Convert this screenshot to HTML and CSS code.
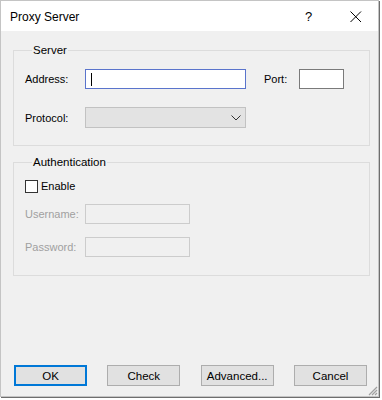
FILE: index.html
```html
<!DOCTYPE html>
<html>
<head>
<meta charset="utf-8">
<link rel="stylesheet" href="styles.css">
</head>
<body>
<div class="window">
  <div class="titlebar">
    <span class="title">Proxy Server</span>
    <span class="help">?</span>
    <span class="close">
      <svg width="12" height="12" viewBox="0 0 12 12"><path d="M0.5 0.5 L11 11 M11 0.5 L0.5 11" stroke="#000" stroke-width="1" fill="none"/></svg>
    </span>
  </div>
  <div class="content">
    <fieldset class="group server">
      <legend>Server</legend>
      <div class="row">
        <span class="label">Address:</span>
        <div class="textbox focused address"><span class="caret"></span></div>
        <span class="label port-label">Port:</span>
        <div class="textbox port"></div>
      </div>
      <div class="row row-protocol">
        <span class="label">Protocol:</span>
        <div class="combo">
          <svg width="10" height="6" viewBox="0 0 10 6"><path d="M0.5 0.5 L5 5 L9.5 0.5" stroke="#333" stroke-width="1" fill="none"/></svg>
        </div>
      </div>
    </fieldset>
    <fieldset class="group auth">
      <legend>Authentication</legend>
      <div class="row row-enable">
        <span class="checkbox"></span>
        <span class="check-label">Enable</span>
      </div>
      <div class="row row-user">
        <span class="label disabled">Username:</span>
        <div class="textbox disabled-box"></div>
      </div>
      <div class="row row-pass">
        <span class="label disabled">Password:</span>
        <div class="textbox disabled-box"></div>
      </div>
    </fieldset>
    <div class="buttons">
      <button class="btn default">OK</button>
      <button class="btn">Check</button>
      <button class="btn">Advanced...</button>
      <button class="btn">Cancel</button>
    </div>
  </div>
  <svg class="grip" width="10" height="10" viewBox="0 0 10 10">
    <path d="M9 1 L1 9 M9 4 L4 9 M9 7 L7 9" stroke="#a0a0a0" stroke-width="1.2" fill="none"/>
  </svg>
</div>
</body>
</html>
```
FILE: styles.css
```css
html, body {
  margin: 0;
  padding: 0;
}
body {
  background: #ffffff;
  width: 382px;
  height: 400px;
  overflow: hidden;
  font-family: "Liberation Sans", Arial, sans-serif;
  font-size: 11px;
  color: #000;
}
.window {
  position: relative;
  width: 379px;
  height: 397px;
  box-sizing: border-box;
  border: 1px solid #c4c4c4;
  box-shadow: 1px 1px 0 #6e6e6e;
  background: #f0f0f0;
  display: flex;
  flex-direction: column;
}
.titlebar {
  height: 30px;
  background: #fff;
  display: flex;
  align-items: center;
  flex-shrink: 0;
}
.title {
  font-size: 12px;
  margin-left: 9px;
  flex: 1;
  padding-top: 1px;
}
.help {
  font-size: 13px;
  width: 12px;
  margin-right: 33px;
  padding-top: 1px;
}
.close {
  width: 12px;
  height: 12px;
  margin-right: 16px;
  display: flex;
  margin-top: 2px;
}
.content {
  flex: 1;
  display: flex;
  flex-direction: column;
  padding: 12px 8px 0 12px;
}
.group {
  margin: 0;
  border: 1px solid #dcdcdc;
  padding: 11px 0 17px 11px;
  min-width: 0;
}
.group legend {
  padding: 0 1px;
  margin-left: 7px;
  line-height: 15px;
  font-size: 11.5px;
}
.auth {
  margin-top: 9px;
  padding-top: 6px;
  padding-bottom: 18px;
}
.row {
  display: flex;
  align-items: center;
  height: 20px;
}
.row-protocol {
  margin-top: 18px;
  height: 21px;
}
.row-user {
  margin-top: 8px;
}
.row-pass {
  margin-top: 13px;
}
.label {
  width: 60px;
  flex-shrink: 0;
}
.label.disabled {
  color: #a0a0a0;
}
.port-label {
  width: 35px;
  margin-left: 18px;
}
.textbox {
  box-sizing: border-box;
  height: 20px;
  background: #fff;
  border: 1px solid #7a7a7a;
  display: flex;
  align-items: center;
}
.address {
  width: 161px;
  border-color: #5a74cc;
}
.port {
  width: 45px;
}
.caret {
  width: 1px;
  height: 13px;
  background: #000;
  margin-left: 5px;
}
.combo {
  box-sizing: border-box;
  width: 161px;
  height: 21px;
  background: #e3e3e3;
  border: 1px solid #c2c2c2;
  display: flex;
  align-items: center;
  justify-content: flex-end;
  padding-right: 4px;
}
.checkbox {
  box-sizing: border-box;
  width: 13px;
  height: 13px;
  border: 1px solid #333;
  background: #fff;
  margin-left: 0;
}
.check-label {
  margin-left: 3px;
}
.disabled-box {
  width: 105px;
  background: #f0f0f0;
  border-color: #cccccc;
}
.buttons {
  margin-top: auto;
  display: flex;
  justify-content: space-between;
  padding: 0 3px 10px 1px;
}
.btn {
  box-sizing: border-box;
  width: 73px;
  height: 21px;
  background: #e1e1e1;
  border: 1px solid #adadad;
  font-family: "Liberation Sans", Arial, sans-serif;
  font-size: 11.5px;
  color: #000;
  padding: 0;
  margin: 0;
}
.btn.default {
  border: 2px solid #0078d7;
}
.grip {
  position: absolute;
  right: 0;
  bottom: 0;
}
```
